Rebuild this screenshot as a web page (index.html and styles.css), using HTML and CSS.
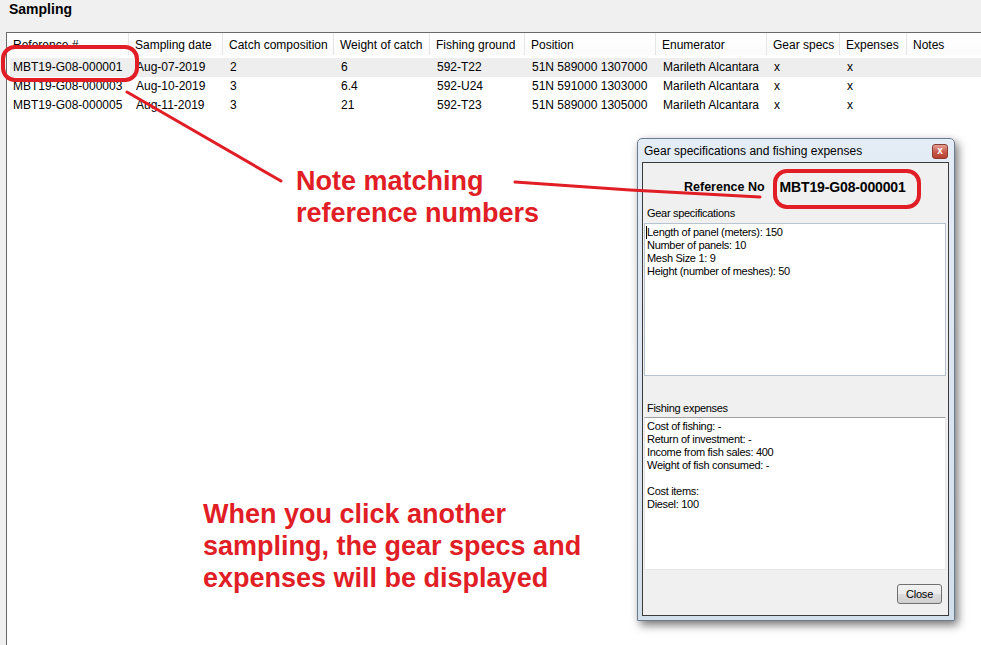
FILE: index.html
```html
<!DOCTYPE html>
<html>
<head>
<meta charset="utf-8">
<title>Sampling</title>
<link rel="stylesheet" href="styles.css">
</head>
<body>
<div class="page">
  <h1 class="title">Sampling</h1>
  <div class="list">
    <div class="list-head">
      <div class="hcell">Reference #</div>
      <div class="hcell">Sampling date</div>
      <div class="hcell">Catch composition</div>
      <div class="hcell">Weight of catch</div>
      <div class="hcell">Fishing ground</div>
      <div class="hcell">Position</div>
      <div class="hcell">Enumerator</div>
      <div class="hcell">Gear specs</div>
      <div class="hcell">Expenses</div>
      <div class="hcell">Notes</div>
    </div>
    <div class="list-body">
      <div class="row selected">
        <div class="cell">MBT19-G08-000001</div>
        <div class="cell">Aug-07-2019</div>
        <div class="cell">2</div>
        <div class="cell">6</div>
        <div class="cell">592-T22</div>
        <div class="cell">51N 589000 1307000</div>
        <div class="cell">Marileth Alcantara</div>
        <div class="cell">x</div>
        <div class="cell">x</div>
        <div class="cell"></div>
      </div>
      <div class="row">
        <div class="cell">MBT19-G08-000003</div>
        <div class="cell">Aug-10-2019</div>
        <div class="cell">3</div>
        <div class="cell">6.4</div>
        <div class="cell">592-U24</div>
        <div class="cell">51N 591000 1303000</div>
        <div class="cell">Marileth Alcantara</div>
        <div class="cell">x</div>
        <div class="cell">x</div>
        <div class="cell"></div>
      </div>
      <div class="row">
        <div class="cell">MBT19-G08-000005</div>
        <div class="cell">Aug-11-2019</div>
        <div class="cell">3</div>
        <div class="cell">21</div>
        <div class="cell">592-T23</div>
        <div class="cell">51N 589000 1305000</div>
        <div class="cell">Marileth Alcantara</div>
        <div class="cell">x</div>
        <div class="cell">x</div>
        <div class="cell"></div>
      </div>
    </div>
  </div>
</div>

<div class="dialog">
  <div class="dlg-title">
    <span class="dlg-title-text">Gear specifications and fishing expenses</span>
    <span class="dlg-close">x</span>
  </div>
  <div class="client">
    <div class="ref-row">
      <span class="ref-label">Reference No</span>
      <span class="ref-value">MBT19-G08-000001</span>
    </div>
    <div class="group-label">Gear specifications</div>
    <div class="textbox tb-gear"><span class="caret"></span>Length of panel (meters): 150
Number of panels: 10
Mesh Size 1: 9
Height (number of meshes): 50</div>
    <div class="group-label label-exp">Fishing expenses</div>
    <div class="textbox tb-exp">Cost of fishing: -
Return of investment: -
Income from fish sales: 400
Weight of fish consumed: -

Cost items:
Diesel: 100</div>
    <button class="btn-close">Close</button>
  </div>
</div>

<svg class="marks" width="981" height="645" viewBox="0 0 981 645">
  <rect x="3" y="47" width="134" height="33" rx="12" ry="12" fill="none" stroke="#e11d25" stroke-width="4"/>
  <line x1="127" y1="92" x2="281" y2="181" stroke="#e11d25" stroke-width="3" stroke-linecap="round"/>
  <polyline points="515,182 630,190 760,197" fill="none" stroke="#e11d25" stroke-width="3" stroke-linecap="round"/>
  <rect x="775" y="171" width="144" height="36" rx="12" ry="12" fill="none" stroke="#e11d25" stroke-width="4"/>
</svg>

<div class="note note-match">Note matching<br>reference numbers</div>
<div class="note note-click">When you click another<br>sampling, the gear specs and<br>expenses will be displayed</div>
</body>
</html>
```

FILE: styles.css
```css
html, body {
  margin: 0;
  padding: 0;
}
body {
  width: 981px;
  height: 645px;
  overflow: hidden;
  background: #f0f0f0;
  font-family: "Liberation Sans", Arial, sans-serif;
  color: #000;
  position: relative;
}
.page {
  display: flex;
  flex-direction: column;
}
.title {
  margin: 0;
  padding-left: 9px;
  font-size: 14px;
  font-weight: bold;
  line-height: 19px;
  height: 19px;
}
.list {
  margin: 13px 0 0 6px;
  height: 640px;
  background: #fff;
  border-left: 1px solid #6a6a6a;
  border-top: 1px solid #6a6a6a;
  font-size: 12px;
}
.list-head {
  display: grid;
  grid-template-columns: 122px 94px 111px 96px 95px 131px 111px 73px 67px 90px;
  height: 22px;
  background: linear-gradient(#ffffff, #fbfbfc);
}
.hcell {
  padding-left: 6px;
  height: 22px;
  line-height: 24px;
  border-right: 1px solid #e5e5e5;
  white-space: nowrap;
  overflow: hidden;
}
.list-body {
  padding-top: 3px;
}
.row {
  display: grid;
  grid-template-columns: 119px 94px 111px 96px 95px 131px 111px 73px 67px 90px;
  margin-left: 3px;
  height: 19px;
  line-height: 19px;
}
.row.selected {
  background: #eeeeee;
}
.cell {
  padding-left: 7px;
  white-space: nowrap;
  overflow: hidden;
}
.cell:first-child {
  padding-left: 3px;
}

/* dialog window */
.dialog {
  position: absolute;
  left: 637px;
  top: 138px;
  width: 318px;
  height: 483px;
  box-sizing: border-box;
  border: 1px solid #6c7c90;
  border-radius: 5px 5px 0 0;
  background: linear-gradient(#e4ecf6, #d3deeb);
  box-shadow: 3px 4px 10px rgba(0, 0, 0, 0.55);
  display: flex;
  flex-direction: column;
  padding: 0 5px 4px 4px;
}
.dlg-title {
  height: 23px;
  display: flex;
  align-items: center;
  justify-content: space-between;
  padding-left: 2px;
  font-size: 12px;
}
.dlg-close {
  width: 16px;
  height: 15px;
  margin-right: 1px;
  margin-top: 1px;
  box-sizing: border-box;
  border: 1px solid #8b3b32;
  border-radius: 3px;
  background: linear-gradient(#e3a096, #c8574a 55%, #b8412f);
  color: #fff;
  font-size: 10px;
  font-weight: bold;
  line-height: 11px;
  text-align: center;
}
.client {
  flex: 1;
  border: 1px solid #3a3a3a;
  background: #f0f0f0;
  padding: 0 2px 0 1px;
  display: flex;
  flex-direction: column;
  font-size: 11px;
  letter-spacing: -0.3px;
}
.ref-row {
  margin-top: 16px;
  height: 16px;
  display: flex;
  align-items: center;
  padding-left: 40px;
  gap: 15px;
  font-weight: bold;
  letter-spacing: 0;
}
.ref-label {
  font-size: 12.5px;
}
.ref-value {
  font-size: 14px;
  letter-spacing: -0.15px;
}
.group-label {
  margin-top: 11px;
  height: 14px;
  line-height: 14px;
  padding-left: 3px;
}
.label-exp {
  margin-top: 25px;
}
.textbox {
  height: 153px;
  box-sizing: border-box;
  background: #fff;
  white-space: pre-line;
  line-height: 13px;
  padding: 2px 2px;
}
.tb-gear {
  margin-top: 3px;
  border: 1px solid #b7c3d0;
}
.tb-exp {
  margin-top: 2px;
  border: 1px solid #e6e6e6;
  border-top-color: #a0a0a0;
}
.caret {
  display: inline-block;
  width: 1px;
  height: 13px;
  background: #000;
  vertical-align: top;
  margin-left: -1px;
}
.btn-close {
  align-self: flex-end;
  margin-top: 14px;
  margin-right: 4px;
  width: 45px;
  height: 20px;
  padding: 0;
  box-sizing: border-box;
  border: 1px solid #707070;
  border-radius: 3px;
  background: linear-gradient(#f2f2f2 0%, #ebebeb 50%, #dddddd 51%, #cfcfcf 100%);
  font-family: "Liberation Sans", Arial, sans-serif;
  font-size: 11px;
  letter-spacing: -0.2px;
  color: #000;
}

/* annotations */
.marks {
  position: absolute;
  left: 0;
  top: 0;
  pointer-events: none;
}
.note {
  position: absolute;
  color: #e11d25;
  font-family: "Liberation Sans", Arial, sans-serif;
  font-weight: bold;
  font-size: 27px;
  line-height: 32px;
  white-space: nowrap;
}
.note-match {
  left: 296px;
  top: 165px;
}
.note-click {
  left: 203px;
  top: 498px;
}
```
